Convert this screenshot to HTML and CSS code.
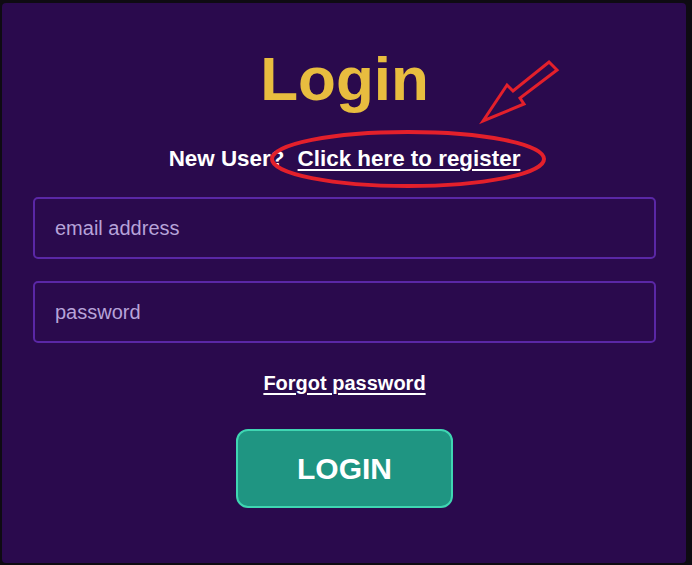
FILE: index.html
```html
<!DOCTYPE html>
<html lang="en">
<head>
<meta charset="utf-8">
<title>Login</title>
<link rel="stylesheet" href="styles.css">
</head>
<body>
<main class="panel">
  <h1 class="title">Login</h1>
  <p class="signup">New User? <a class="link signup-link" href="#">Click here to register</a></p>
  <form class="form">
    <input class="field" type="email" placeholder="email address">
    <input class="field" type="password" placeholder="password">
    <a class="link forgot" href="#">Forgot password</a>
    <button class="btn" type="button">LOGIN</button>
  </form>
</main>
<svg class="annot" width="692" height="565" viewBox="0 0 692 565" aria-hidden="true">
  <ellipse cx="408" cy="159" rx="136" ry="27" fill="none" stroke="#e3202b" stroke-width="4"/>
  <polygon points="483,121 507,85 513,91 549,62 557,70 520,98 524,104" fill="none" stroke="#e3202b" stroke-width="3" stroke-linejoin="miter"/>
</svg>
</body>
</html>
```

FILE: styles.css
```css
html, body {
  margin: 0;
  padding: 0;
}
body {
  position: relative;
  width: 692px;
  height: 565px;
  background: #0e0b12;
  font-family: "Liberation Sans", Arial, sans-serif;
  overflow: hidden;
}
.panel {
  box-sizing: border-box;
  margin: 3px 0 0 2px;
  width: 684px;
  height: 560px;
  padding: 41px 30px 0 31px;
  background: #2a0a4d;
  border-radius: 4px;
  display: flex;
  flex-direction: column;
  align-items: center;
}
.title {
  margin: 0;
  font-size: 62px;
  line-height: 70px;
  font-weight: 700;
  color: #e8bd3f;
}
.signup {
  margin: 32px 0 0;
  font-size: 22.4px;
  line-height: 26px;
  font-weight: 700;
  color: #ffffff;
}
.link {
  color: #ffffff;
  text-decoration: underline;
  text-decoration-thickness: 2px;
  text-underline-offset: 3px;
  font-weight: 700;
}
.signup-link {
  margin-left: 7px;
}
.form {
  margin-top: 25px;
  width: 100%;
  display: flex;
  flex-direction: column;
  align-items: center;
}
.field {
  box-sizing: border-box;
  width: 100%;
  height: 62px;
  margin: 0 0 22px;
  padding: 0 20px;
  background: #2a0a4d;
  border: 2px solid #5a27a6;
  border-radius: 5px;
  font-family: "Liberation Sans", Arial, sans-serif;
  font-size: 20px;
  color: #ffffff;
  outline: none;
}
.field::placeholder {
  color: #b7a3d9;
}
.forgot {
  margin-top: 6px;
  font-size: 20px;
  line-height: 24px;
}
.btn {
  box-sizing: border-box;
  margin-top: 34px;
  width: 217px;
  height: 79px;
  background: #1f9582;
  border: 2px solid #3fd6b2;
  border-radius: 12px;
  color: #ffffff;
  font-family: "Liberation Sans", Arial, sans-serif;
  font-size: 30px;
  font-weight: 700;
  cursor: pointer;
}
.annot {
  position: absolute;
  top: 0;
  left: 0;
  pointer-events: none;
}
```
